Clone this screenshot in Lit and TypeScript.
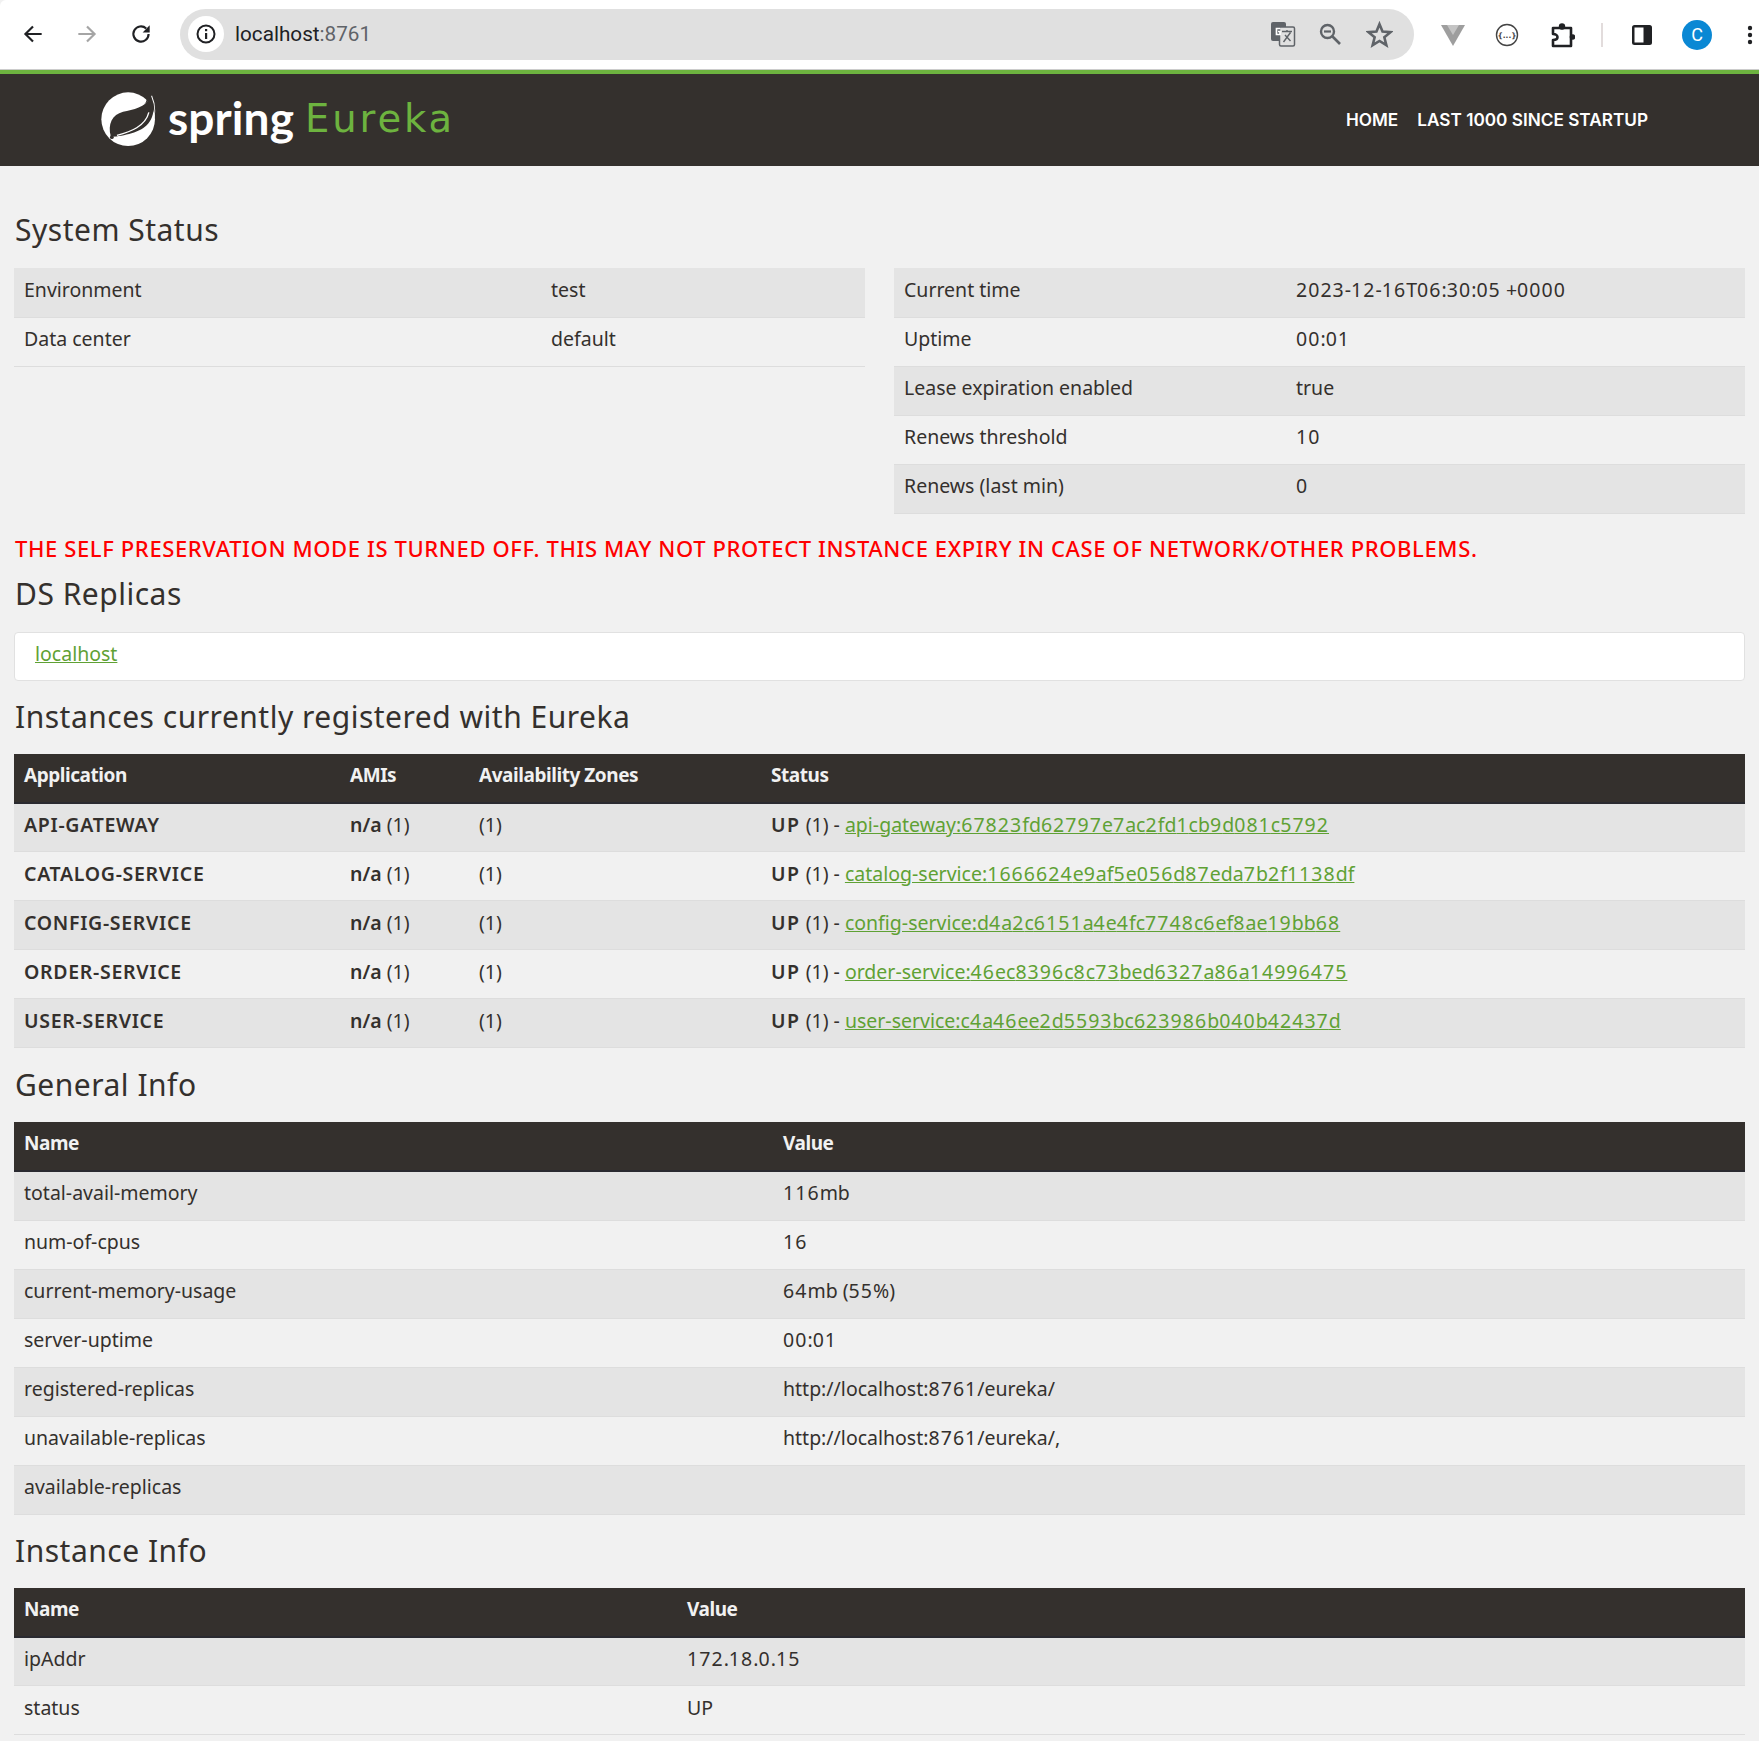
import { LitElement, html, css, svg } from "lit";
import { customElement } from "lit/decorators.js";

const leaf = html`<svg class="leaf" viewBox="35 22 165 165" width="56" height="56">
  <circle cx="115" cy="105" r="79" fill="#fff"/>
  <path fill="#34302d" d="M160 20 L205 20 L205 190 L196 90 C194 70 190 50 183 36 C178 48 172 56 162 62 C172 52 172 40 160 20z"/>
  <path fill="#34302d" d="M64 157 C54 118 68 92 100 83 C130 76 165 72 183 38 C193 62 192 86 182 106 C165 140 120 150 80 156z"/>
  <path d="M82 153 C122 142 166 126 176 85" fill="none" stroke="#fff" stroke-width="4"/>
  <path d="M184 36 C197 66 196 100 182 126" fill="none" stroke="#fff" stroke-width="3"/>
  <circle cx="67" cy="158" r="5.500" fill="#34302d"/>
</svg>`;

const ic = {
  back: svg`<path d="M20 12H5M12 5l-7 7 7 7" fill="none" stroke="currentColor" stroke-width="2"/>`,
  reload: svg`<path d="M19 12a7 7 0 1 1-2.2-5.1" fill="none" stroke="currentColor" stroke-width="2"/><path d="M20 4v6.5h-6.5z" fill="currentColor"/>`,
};

/* Digits in the reference face run wider than in Noto Sans: give them extra tracking. */
const t = (s: string) => s.split(/(\d+)/).map((p, i) => (i % 2 ? html`<span class="num">${p}</span>` : p));

function kvTable(rows: string[][], w: string) {
  return html`<table><colgroup><col style="width:${w}"><col></colgroup><tbody>${rows.map(r => html`<tr><td>${r[0]}</td><td>${t(r[1])}</td></tr>`)}</tbody></table>`;
}

@customElement("app-root")
export class AppRoot extends LitElement {
  static styles = css`
    :host { display: block; height: 1741px; overflow: hidden; background: #f1f1f1; color: #34302d; font-family: "Noto Sans", "Open Sans", sans-serif; font-size: 19.500px; }
    .chrome { background: #fff; display: flex; align-items: center; padding: 0 0 0 20px; box-sizing: border-box; border-bottom: 1px solid #ccc; height: 70px; border-top-left-radius: 6px; }
    .nb { width: 26px; height: 26px; color: #202124; flex: none; margin-right: 28px; margin-top: -1px; }
    .nb.off { color: #a5a5a5; }
    .nb.last { margin-right: 26px; }
    .omni { width: 1234px; height: 51px; margin-top: -1px; background: #e0e0e0; border-radius: 26px; display: flex; align-items: center; padding-left: 8px; box-sizing: border-box; flex: none; font-family: "Roboto", sans-serif; font-size: 20.700px; }
    .info { height: 36px; border-radius: 18px; background: #fff; width: 36px; display: flex; align-items: center; justify-content: center; margin-right: 11px; flex: none; }
    .host { color: #202124; } .port { color: #5f6368; }
    .spacer { flex: 1; }
    .oi { flex: none; color: #5f6368; }
    .ext { flex: none; }
    .avatar { width: 30px; height: 30px; border-radius: 50%; background: #0a88d4; color: #fff; font: 18px Roboto, sans-serif; display: flex; align-items: center; justify-content: center; flex: none; }
    .sep { width: 2px; height: 24px; background: #e2dcdc; flex: none; }
    .banner { height: 92px; border-top: 4px solid #6db33f; background: #34302d; display: flex; align-items: center; box-sizing: content-box; padding: 0 111px 0 101px; }
    .leaf { flex: none; margin-right: 11px; margin-bottom: 2px; }
    .spring { color: #fff; font: 700 46px/1 "Lato", sans-serif; letter-spacing: 0.100px; margin-bottom: 4px; }
    .eureka { color: #6db33f; font: 400 38.500px/1 "DejaVu Sans", sans-serif; margin-left: 11px; letter-spacing: 2.900px; margin-bottom: 2px; }
    nav { margin-left: auto; display: flex; gap: 19px; color: #fff; font: 600 17.200px "Inter", sans-serif; margin-bottom: 2px; }
    main { padding: 0 14px; }
    h2 { margin: 0; padding-left: 1px; font-weight: 400; font-size: 30px; line-height: 38px; letter-spacing: 0.500px; color: #34302d; }
    .h-first { margin-top: 45px; margin-bottom: 19px; }
    .h-ds { margin-top: 15px; margin-bottom: 19px; }
    .h { margin-top: 17px; margin-bottom: 18px; }
    .h.g { margin-top: 18px; }
    .status { display: grid; grid-template-columns: 851px 851px; column-gap: 29px; align-items: start; }
    table { border-collapse: collapse; width: 100%; table-layout: fixed; }
    th, td { text-align: left; padding: 0 10px 6px; height: 49px; box-sizing: border-box; vertical-align: middle; font-weight: 400; }
    tbody tr { border-bottom: 1px solid #ddd; }
    tbody tr:nth-child(odd) { background: #e4e4e4; }
    thead tr { background: #34302d; color: #f1f1f1; border-bottom: 2px solid #2a2a30; }
    th { font-weight: 700; font-size: 19px; letter-spacing: -0.450px; }
    b { font-weight: 600; }
    .app { letter-spacing: 0.700px; }
    .up { letter-spacing: 1.500px; }
    .num { letter-spacing: 1.050px; }
    a { color: #5fa134; text-decoration: underline; }
    .warn { color: #f00; font-size: 22px; font-weight: 500; letter-spacing: 0.620px; line-height: 24px; margin-top: 22px; padding-left: 1px; }
    .well { background: #fff; border: 1px solid #e1e1e1; border-radius: 4px; height: 49px; box-sizing: border-box; display: flex; align-items: center; padding: 0 0 6px 20px; }
  `;

  render() {
    const insts = [
      ["API-GATEWAY", "api-gateway:67823fd62797e7ac2fd1cb9d081c5792"],
      ["CATALOG-SERVICE", "catalog-service:1666624e9af5e056d87eda7b2f1138df"],
      ["CONFIG-SERVICE", "config-service:d4a2c6151a4e4fc7748c6ef8ae19bb68"],
      ["ORDER-SERVICE", "order-service:46ec8396c8c73bed6327a86a14996475"],
      ["USER-SERVICE", "user-service:c4a46ee2d5593bc623986b040b42437d"],
    ];
    const general = [
      ["total-avail-memory", "116mb"], ["num-of-cpus", "16"], ["current-memory-usage", "64mb (55%)"],
      ["server-uptime", "00:01"], ["registered-replicas", "http://localhost:8761/eureka/"],
      ["unavailable-replicas", "http://localhost:8761/eureka/,"], ["available-replicas", ""],
    ];
    return html`
      <div class="chrome">
        <svg class="nb" viewBox="0 0 24 24">${ic.back}</svg>
        <svg class="nb off" viewBox="0 0 24 24" style="transform:scaleX(-1)">${ic.back}</svg>
        <svg class="nb last" viewBox="0 0 24 24">${ic.reload}</svg>
        <div class="omni">
          <div class="info"><svg width="22" height="22" viewBox="0 0 22 22"><circle cx="11" cy="11" r="8.500" fill="none" stroke="#202124" stroke-width="2"/><rect x="10" y="10" width="2.200" height="6" fill="#202124"/><rect x="10" y="6" width="2.200" height="2.200" fill="#202124"/></svg></div>
          <span class="host">localhost</span><span class="port">:8761</span>
          <span class="spacer"></span>
          <svg class="oi" width="26" height="26" viewBox="0 0 26 26" style="margin-right:21px"><rect x="1" y="1" width="15" height="19" rx="2" fill="#5f6368"/><rect x="9.500" y="6" width="15" height="19" rx="1.500" fill="#e0e0e0" stroke="#5f6368" stroke-width="1.500"/><path d="M12 10.500h10M17 9v2M13.500 21l7-9.500M15 14l5.500 6" stroke="#5f6368" stroke-width="1.400" fill="none"/><path d="M10.500 7.500H6.500v6h3.500v-3H8" fill="none" stroke="#fff" stroke-width="1.700"/></svg>
          <svg class="oi" width="26" height="26" viewBox="0 0 26 26" style="margin-right:23px"><circle cx="10.500" cy="10.500" r="6.500" fill="none" stroke="currentColor" stroke-width="2.400"/><path d="M7 10.500h7" stroke="currentColor" stroke-width="2.200"/><path d="M15.500 15.500L23 23" stroke="currentColor" stroke-width="2.600"/></svg>
          <svg class="oi" width="27" height="27" viewBox="0 0 24 24" style="margin-right:21px"><path d="M12 2.800l2.700 6.600 7.100.5-5.500 4.600 1.800 7-6.100-3.800-6.100 3.800 1.800-7L2.200 9.900l7.100-.5z" fill="none" stroke="currentColor" stroke-width="2.300"/></svg>
        </div>
        <svg class="ext" width="26" height="24" viewBox="0 0 26 24" style="margin-left:26px"><path d="M1 2h24L13 23z" fill="#9e9e9e"/><path d="M7 2h12l-6 10z" fill="#c4c4c4"/></svg>
        <svg class="ext" width="26" height="26" viewBox="0 0 26 26" style="margin-left:28px"><circle cx="13" cy="13" r="10.500" fill="#fff" stroke="#444" stroke-width="1.400"/><text x="13" y="16" font-size="7.500" text-anchor="middle" font-family="DejaVu Sans" font-weight="700" fill="#444">{...}</text></svg>
        <svg class="ext" width="26" height="26" viewBox="0 0 26 26" style="margin-left:29px"><path d="M4 6H22V24H4V18C7 18 8.500 16.500 8.500 15S7 12 4 12z" fill="none" stroke="#202124" stroke-width="2.600" stroke-linejoin="round"/><circle cx="13" cy="4.500" r="3.200" fill="#202124"/><circle cx="23.500" cy="15" r="2.800" fill="#202124"/></svg>
        <div class="sep" style="margin-left:26px"></div>
        <svg class="ext" width="22" height="22" viewBox="0 0 22 22" style="margin-left:28px"><rect x="1" y="1" width="20" height="20" rx="2.500" fill="#202124"/><rect x="3.500" y="3.500" width="9" height="15" fill="#fff"/></svg>
        <div class="avatar" style="margin-left:29px">C</div>
        <svg class="ext" width="6" height="24" viewBox="0 0 6 24" style="margin-left:35px"><circle cx="3" cy="5" r="2.200" fill="#202124"/><circle cx="3" cy="12" r="2.200" fill="#202124"/><circle cx="3" cy="19" r="2.200" fill="#202124"/></svg>
      </div>
      <div class="banner">
        ${leaf}<span class="spring">spring</span><span class="eureka">Eureka</span>
        <nav><span>HOME</span><span>LAST 1000 SINCE STARTUP</span></nav>
      </div>
      <main>
        <h2 class="h-first">System Status</h2>
        <div class="status">
          ${kvTable([["Environment", "test"], ["Data center", "default"]], "527px")}
          ${kvTable([["Current time", "2023-12-16T06:30:05 +0000"], ["Uptime", "00:01"], ["Lease expiration enabled", "true"], ["Renews threshold", "10"], ["Renews (last min)", "0"]], "392px")}
        </div>
        <div class="warn">THE SELF PRESERVATION MODE IS TURNED OFF. THIS MAY NOT PROTECT INSTANCE EXPIRY IN CASE OF NETWORK/OTHER PROBLEMS.</div>
        <h2 class="h-ds">DS Replicas</h2>
        <div class="well"><a>localhost</a></div>
        <h2 class="h">Instances currently registered with Eureka</h2>
        <table>
          <colgroup><col style="width:326px"><col style="width:129px"><col style="width:292px"><col></colgroup>
          <thead><tr><th>Application</th><th>AMIs</th><th>Availability Zones</th><th>Status</th></tr></thead>
          <tbody>${insts.map(i => html`<tr><td><b class="app">${i[0]}</b></td><td><b>n/a</b> (1)</td><td>(1)</td><td><b class="up">UP</b> (1) - <a>${t(i[1])}</a></td></tr>`)}</tbody>
        </table>
        <h2 class="h g">General Info</h2>
        <table>
          <colgroup><col style="width:759px"><col></colgroup>
          <thead><tr><th>Name</th><th>Value</th></tr></thead>
          <tbody>${general.map(r => html`<tr><td>${r[0]}</td><td>${t(r[1])}</td></tr>`)}</tbody>
        </table>
        <h2 class="h">Instance Info</h2>
        <table>
          <colgroup><col style="width:663px"><col></colgroup>
          <thead><tr><th>Name</th><th>Value</th></tr></thead>
          <tbody><tr><td>ipAddr</td><td>${t("172.18.0.15")}</td></tr><tr><td>status</td><td>UP</td></tr></tbody>
        </table>
      </main>
    `;
  }
}
